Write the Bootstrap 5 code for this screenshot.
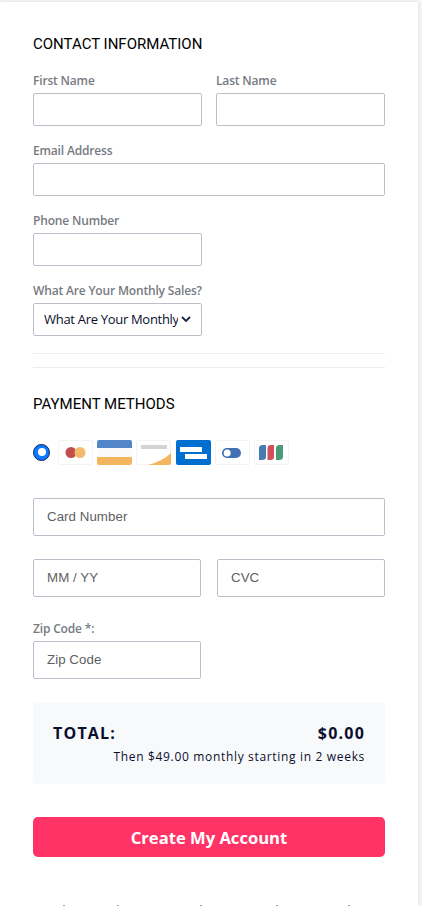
<!DOCTYPE html>
<html lang="en"><head><meta charset="utf-8"><meta name="viewport" content="width=device-width, initial-scale=1">
<title>Create account</title>
<link rel="stylesheet" href="https://cdn.jsdelivr.net/npm/bootstrap@5.3.0/dist/css/bootstrap.min.css">
<style>
html,body{height:906px;overflow:hidden}
body{background:#f6f8f8;font-family:"Open Sans",sans-serif;color:#0a0f2d}
.panel{margin:2px 4px 0 0;height:904px;background:#fff;box-shadow:0 0 5px rgba(0,0,0,.12);padding:31px 33px 0}
.heading{font:400 15px/22px Roboto,sans-serif;color:#000;margin:0}
.two{display:grid;grid-template-columns:169px 169px;column-gap:14px}
.two.pay{grid-template-columns:168px 168px;column-gap:16px}
.gap-a{margin-top:16px}.gap-b{margin-top:15px}.gap-c{margin-top:23px}
.rule-a{margin-top:17px}.rule-b{margin-top:13px}.gap-d{margin-top:25px}.gap-e{margin-top:32px}
.field-label{display:block;font-size:12px;font-weight:600;line-height:20px;height:22px;letter-spacing:-.17px;color:#777b82;white-space:nowrap;margin:0}
.zip-label{height:21px;line-height:18px}
.field{height:33px;padding:0 10px;border:1px solid #bfbdca;border-radius:2px;font-size:13px}
.field.tall{height:38px;padding:0 13px 2px;font-family:"Liberation Sans",Arial,sans-serif;font-size:13.3px;letter-spacing:.05px}
.tall::placeholder{color:#5f5f5f}
.sales{color:#0a0f2d;background:#fff;display:flex;align-items:center;width:169px}
.sales span{width:134px;flex:none;overflow:hidden;white-space:nowrap;letter-spacing:-.3px}
.sales svg{margin-left:3px;flex:none}
.rule{height:1px;background:#ececee}
.radio{width:17px;height:17px;border-radius:50%;border:1px solid #10245e;background:#0a7aff;display:grid;place-items:center;margin:0 8px 2px 0}
.radio::after{content:"";width:8px;height:8px;border-radius:50%;background:#fff}
.brands svg{width:36px;height:26px;margin-right:3.2px;display:block;flex:none}
.summary{height:81px;margin-top:24px;background:#f8f9fb;border-radius:4px;padding:19px 20px 0}
.sum-main{font-size:16px;font-weight:700;line-height:22px;letter-spacing:1.2px}
.sum-note{font-size:12px;line-height:18px;letter-spacing:.67px;text-align:right;margin-top:4px}
.create{height:40px;margin-top:33px;background:#ff3366;color:#fff;border:0;border-radius:5px;font-size:16.6px;font-weight:700;padding:2px 0 0}
.create:hover{background:#f02a5c;color:#fff}
.stems{display:grid;grid-template-columns:54px 83px 76px 72px 2px;margin-top:48px;padding-left:30px;height:1px}
.stems i{width:2px;height:1px;background:#a5a09d}
</style></head><body>
<main class="panel">
<h2 class="heading">CONTACT INFORMATION</h2>
<form>
<div class="two gap-a">
<div><label class="field-label" for="fn">First Name</label><input id="fn" class="form-control field"></div>
<div><label class="field-label" for="ln">Last Name</label><input id="ln" class="form-control field"></div></div>
<div class="gap-b"><label class="field-label" for="em">Email Address</label><input id="em" class="form-control field"></div>
<div class="two gap-b"><div><label class="field-label" for="ph">Phone Number</label><input id="ph" class="form-control field"></div></div>
<div class="gap-b"><div class="field-label">What Are Your Monthly Sales?</div>
<div class="field sales" role="combobox"><span>What Are Your Monthly</span><svg width="10" height="7" viewBox="0 0 10 7"><path d="M1 1l4 4 4-4" fill="none" stroke="#1f2340" stroke-width="1.8"/></svg></div></div>
<div class="rule rule-a"></div><div class="rule rule-b"></div>
<h2 class="heading gap-d">PAYMENT METHODS</h2>
<div class="d-flex align-items-center brands gap-d"><div class="radio flex-shrink-0"></div>
<svg viewBox="0 0 36 26"><rect x=".5" y=".5" width="34" height="24" rx="1.5" fill="#fff" stroke="#f3f3f3"/><circle cx="13" cy="12.5" r="5.5" fill="#c0504d"/><circle cx="22" cy="12.5" r="5.5" fill="#f4bb6d"/></svg>
<svg viewBox="0 0 36 26"><rect x=".5" y=".5" width="34" height="24" rx="1.5" fill="#fafafa"/><path d="M0 8V2Q0 0 2 0H33Q35 0 35 2V8Z" fill="#5385c9"/><path d="M0 17H35V23Q35 25 33 25H2Q0 25 0 23Z" fill="#f4b561"/></svg>
<svg viewBox="0 0 36 26"><rect x=".5" y=".5" width="34" height="24" rx="1.5" fill="#fff" stroke="#f3f3f3"/><path d="M5 5H31V9H5Z" fill="#d3d3d3"/><path d="M12 25Q27 21 35 13V23Q35 25 33 25Z" fill="#f4b561"/></svg>
<svg viewBox="0 0 36 26"><rect width="35" height="25" rx="2" fill="#016fd0"/><path d="M4 7H26V12H4ZM9 14H31V19H9Z" fill="#fff"/></svg>
<svg viewBox="0 0 36 26"><rect x=".5" y=".5" width="34" height="24" rx="1.5" fill="#fff" stroke="#f3f3f3"/><rect x="7" y="8" width="19" height="10" rx="5" fill="#4270b2"/><circle cx="12.2" cy="13" r="3.5" fill="#fff"/></svg>
<svg viewBox="0 0 36 26"><rect x=".5" y=".5" width="34" height="24" rx="1.5" fill="#fff" stroke="#f3f3f3"/><path d="M5 20V8Q5 5 9 5H12V17Q12 20 8 20Z" fill="#467cb4"/><path d="M13.500 20V8Q13.500 5 17 5H20V17Q20 20 16.500 20Z" fill="#d1505c"/><path d="M22 20V8Q22 5 26 5H29V17Q29 20 25 20Z" fill="#4d9a78"/></svg></div>
<input class="form-control field tall gap-e" placeholder="Card Number">
<div class="two pay gap-c"><input class="form-control field tall" placeholder="MM / YY"><input class="form-control field tall" placeholder="CVC"></div>
<div class="two pay gap-c"><div><label class="field-label zip-label" for="zip">Zip Code *:</label><input id="zip" class="form-control field tall" placeholder="Zip Code"></div></div>
<div class="summary"><div class="sum-main d-flex justify-content-between"><span>TOTAL:</span><span>$0.00</span></div><div class="sum-note">Then $49.00 monthly starting in 2 weeks</div></div>
<button type="button" class="btn create w-100 d-block">Create My Account</button>
<div class="stems" aria-hidden="true"><i></i><i></i><i></i><i></i><i></i></div>
</form></main>
<script src="https://cdn.jsdelivr.net/npm/bootstrap@5.3.0/dist/js/bootstrap.bundle.min.js"></script>
</body></html>
